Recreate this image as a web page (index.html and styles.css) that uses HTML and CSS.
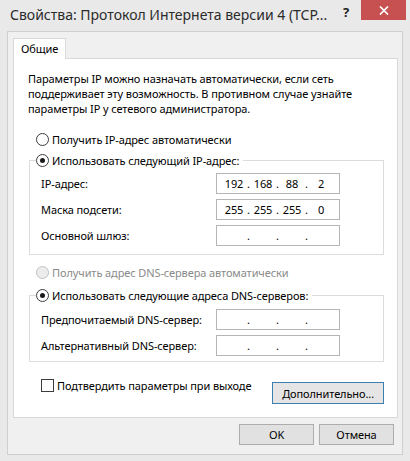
FILE: index.html
```html
<!DOCTYPE html>
<html lang="ru">
<head>
    <meta charset="UTF-8">
    <title>Свойства: Протокол Интернета версии 4 (TCP/IPv4)</title>
    <link rel="stylesheet" href="styles.css">
</head>
<body>
    <div class="window">
        <div class="titlebar">
            <span class="title">Свойства: Протокол Интернета версии 4 (TCP...</span>
            <span class="help">?</span>
            <span class="close">
                <svg width="10" height="9" viewBox="0 0 10 9">
                    <path d="M1 0.5 L9 8.5 M9 0.5 L1 8.5" stroke="#fff" stroke-width="1.7" fill="none"/>
                </svg>
            </span>
        </div>

        <div class="client">
            <div class="tabs">
                <div class="tab">Общие</div>
            </div>

            <div class="panel">
                <p class="intro">Параметры IP можно назначать автоматически, если сеть<br>поддерживает эту возможность. В противном случае узнайте<br>параметры IP у сетевого администратора.</p>

                <label class="radio first"><span class="mark"></span>Получить IP-адрес автоматически</label>

                <fieldset class="group ip-group">
                    <legend><label class="radio"><span class="mark on"></span>Использовать следующий IP-адрес:</label></legend>
                    <div class="row">
                        <span class="label">IP-адрес:</span>
                        <div class="ip"><span>192</span><i>.</i><span>168</span><i>.</i><span>88</span><i>.</i><span>2</span></div>
                    </div>
                    <div class="row">
                        <span class="label">Маска подсети:</span>
                        <div class="ip"><span>255</span><i>.</i><span>255</span><i>.</i><span>255</span><i>.</i><span>0</span></div>
                    </div>
                    <div class="row">
                        <span class="label">Основной шлюз:</span>
                        <div class="ip"><span></span><i>.</i><span></span><i>.</i><span></span><i>.</i><span></span></div>
                    </div>
                </fieldset>

                <label class="radio disabled"><span class="mark"></span>Получить адрес DNS-сервера автоматически</label>

                <fieldset class="group dns-group">
                    <legend><label class="radio"><span class="mark on"></span>Использовать следующие адреса DNS-серверов:</label></legend>
                    <div class="row">
                        <span class="label">Предпочитаемый DNS-сервер:</span>
                        <div class="ip"><span></span><i>.</i><span></span><i>.</i><span></span><i>.</i><span></span></div>
                    </div>
                    <div class="row">
                        <span class="label">Альтернативный DNS-сервер:</span>
                        <div class="ip"><span></span><i>.</i><span></span><i>.</i><span></span><i>.</i><span></span></div>
                    </div>
                </fieldset>

                <div class="bottom">
                    <label class="check"><span class="box"></span>Подтвердить параметры при выходе</label>
                    <button class="btn default">Дополнительно...</button>
                </div>
            </div>

            <div class="actions">
                <button class="btn">OK</button>
                <button class="btn">Отмена</button>
            </div>
        </div>
    </div>
</body>
</html>
```

FILE: styles.css
```css
body {
    margin: 0;
    background: #e9e9e9;
    font-family: "Noto Sans", "Open Sans", sans-serif;
    font-size: 11px;
    letter-spacing: -0.1px;
    color: #000;
}
.window {
    width: 410px;
    height: 461px;
}

/* title bar */
.titlebar {
    height: 31px;
    display: flex;
    align-items: flex-start;
}
.title {
    flex: 1;
    padding: 5px 0 0 10px;
    font-size: 14px;
    letter-spacing: 0;
    color: #2b2b2b;
    white-space: nowrap;
}
.help {
    width: 18px;
    margin-top: 3px;
    font-size: 13px;
    font-weight: bold;
    color: #222;
}
.close {
    width: 45px;
    height: 20px;
    margin-right: 4px;
    background: #c75050;
    display: flex;
    align-items: center;
    justify-content: center;
}

/* client area */
.client {
    margin: 0 7px;
    height: 424px;
    box-sizing: border-box;
    border: 1px solid #cfcfcf;
    background: #f0f0f0;
    padding: 6px 4px 0 5px;
}
.tabs {
    display: flex;
    position: relative;
    z-index: 1;
}
.tab {
    height: 20px;
    padding: 0 7px;
    margin-bottom: -1px;
    line-height: 20px;
    background: #fff;
    border: 1px solid #d9d9d9;
    border-bottom: none;
}
.panel {
    height: 360px;
    box-sizing: border-box;
    background: #fff;
    border: 1px solid #d9d9d9;
    padding: 12px 13px 0 14px;
}
.intro {
    margin: 0;
    line-height: 15px;
    white-space: nowrap;
}

/* radios and checkbox */
.radio {
    display: flex;
    align-items: center;
    height: 18px;
    white-space: nowrap;
}
.radio.first {
    margin: 14px 0 3px 8px;
}
.radio.disabled {
    margin: 8px 0 5px 8px;
    color: #8a8a8a;
}
.mark {
    width: 11px;
    height: 11px;
    margin-right: 3px;
    border: 1px solid #3c3c3c;
    border-radius: 50%;
    background: #fff;
    display: flex;
    align-items: center;
    justify-content: center;
}
.mark.on::after {
    content: "";
    width: 5px;
    height: 5px;
    border-radius: 50%;
    background: #1a1a1a;
}
.disabled .mark {
    border-color: #c2c2c2;
    background: #ececec;
}
.check {
    display: flex;
    align-items: center;
    white-space: nowrap;
    margin: -4px 0 0 13px;
}
.box {
    width: 11px;
    height: 11px;
    margin-right: 3px;
    border: 1px solid #3c3c3c;
    background: #fff;
}

/* group boxes */
.group {
    margin: 0 0 0 1px;
    border: 1px solid #dcdcdc;
    padding: 4px 43px 8px 11px;
}
.group legend {
    padding: 0 4px 0 0;
    margin-left: -5px;
}
.dns-group {
    padding-top: 5px;
    padding-bottom: 5px;
}
.row {
    display: flex;
    align-items: center;
    justify-content: space-between;
    margin-bottom: 5px;
    white-space: nowrap;
}
.row:last-child {
    margin-bottom: 0;
}
.ip {
    width: 124px;
    height: 21px;
    box-sizing: border-box;
    border: 1px solid #b5b5b5;
    background: #fff;
    padding-left: 6px;
    display: flex;
    align-items: center;
}
.ip span {
    width: 22px;
    text-align: center;
}
.ip i {
    width: 7px;
    font-style: normal;
    text-align: center;
}

/* buttons */
.bottom {
    margin-top: 20px;
    display: flex;
    justify-content: space-between;
    align-items: flex-start;
}
.btn {
    height: 22px;
    padding: 0 9px;
    font: inherit;
    letter-spacing: inherit;
    color: #000;
    background: #e1e1e1;
    border: 1px solid #adadad;
}
.btn.default {
    background: #e5e5e5;
    border-color: #3c7fb1;
}
.actions {
    margin-top: 6px;
    display: flex;
    justify-content: flex-end;
    gap: 5px;
    padding-right: 4px;
}
.actions .btn {
    width: 75px;
    height: 21px;
}
```
